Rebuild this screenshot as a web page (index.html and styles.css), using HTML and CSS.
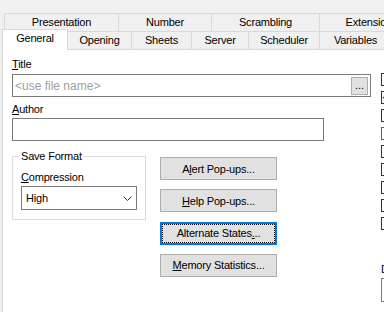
FILE: index.html
```html
<!DOCTYPE html>
<html lang="en">
<head>
  <meta charset="UTF-8">
  <title>Document Properties</title>
  <link rel="stylesheet" href="styles.css">
</head>
<body>

<div class="tabs">
  <div class="tab-row back">
    <div class="tab">Presentation</div>
    <div class="tab">Number</div>
    <div class="tab">Scrambling</div>
    <div class="tab">Extensions</div>
  </div>
  <div class="tab-row front">
    <div class="tab active">General</div>
    <div class="tab">Opening</div>
    <div class="tab">Sheets</div>
    <div class="tab">Server</div>
    <div class="tab">Scheduler</div>
    <div class="tab">Variables</div>
  </div>
</div>

<div class="panel">
  <div class="main">
    <div class="label"><u>T</u>itle</div>
    <div class="field title-field">
      <span class="placeholder">&lt;use file name&gt;</span>
      <span class="browse">...</span>
    </div>
    <div class="label author-label"><u>A</u>uthor</div>
    <div class="field author-field"></div>

    <div class="lower">
      <fieldset class="group">
        <legend>Save Format</legend>
        <div class="label"><u>C</u>ompression</div>
        <div class="combo">
          <span>High</span>
          <svg width="9" height="5" viewBox="0 0 9 5"><polyline points="0.5,0.5 4.5,4.5 8.5,0.5" fill="none" stroke="#333" stroke-width="1"/></svg>
        </div>
      </fieldset>

      <div class="buttons">
        <button class="btn">A<u>l</u>ert Pop-ups...</button>
        <button class="btn"><u>H</u>elp Pop-ups...</button>
        <button class="btn focus">Alternate States<u>.</u>..</button>
        <button class="btn"><u>M</u>emory Statistics...</button>
      </div>
    </div>
  </div>

  <div class="side">
    <div class="checks">
      <span class="check"></span>
      <span class="check"><svg width="11" height="11" viewBox="0 0 11 11"><polyline points="1,5 4,8 10,2" fill="none" stroke="#555" stroke-width="1.5"/></svg></span>
      <span class="check"></span>
      <span class="check hot"></span>
      <span class="check"></span>
      <span class="check"></span>
      <span class="check"></span>
      <span class="check"></span>
      <span class="check"></span>
    </div>
    <div class="label side-label">D</div>
    <div class="field side-field"></div>
  </div>
</div>

</body>
</html>
```

FILE: styles.css
```css
* {
  box-sizing: border-box;
}

html, body {
  margin: 0;
  height: 100%;
}

body {
  font-family: 'Liberation Sans', Arial, sans-serif;
  font-size: 11px;
  letter-spacing: -0.2px;
  color: #000;
  background: #f0f0f0;
  overflow: hidden;
  display: flex;
  flex-direction: column;
}

/* tab strip */

.tabs {
  padding-top: 13px;
}

.tab-row {
  display: flex;
  height: 18px;
}

.tab-row.back {
  padding-left: 4px;
}

.tab-row.front {
  padding-left: 2px;
}

.tab {
  flex: none;
  height: 18px;
  border-top: 1px solid #d9d9d9;
  border-right: 1px solid #d9d9d9;
  background: #f0f0f0;
  line-height: 17px;
  text-align: center;
  white-space: nowrap;
}

.tab:first-child {
  border-left: 1px solid #d9d9d9;
}

.back .tab:nth-child(1) { width: 115px; }
.back .tab:nth-child(2) { width: 93px; }
.back .tab:nth-child(3) { width: 108px; }
.back .tab:nth-child(4) { width: 104px; }

.front .tab:nth-child(1) { width: 66px; }
.front .tab:nth-child(2) { width: 64px; }
.front .tab:nth-child(3) { width: 60px; }
.front .tab:nth-child(4) { width: 57px; }
.front .tab:nth-child(5) { width: 71px; }
.front .tab:nth-child(6) { width: 72px; }

.tab.active {
  position: relative;
  z-index: 1;
  height: 21px;
  margin-top: -2px;
  background: #fff;
}

/* page body */

.panel {
  flex: 1;
  display: flex;
  margin-left: 2px;
  padding: 8px 0 0 9px;
  background: #fff;
  border-top: 1px solid #d9d9d9;
  border-left: 1px solid #d9d9d9;
}

.main {
  flex: none;
  width: 359px;
}

.label {
  line-height: 13px;
  white-space: nowrap;
}

.field {
  height: 23px;
  border: 1px solid #7a7a7a;
  background: #fff;
  display: flex;
  align-items: center;
  padding: 0 2px;
}

.title-field {
  margin-top: 3px;
}

.placeholder {
  flex: 1;
  color: #a0a0a0;
  font-size: 12px;
  letter-spacing: 0;
}

.browse {
  width: 17px;
  height: 18px;
  background: #e1e1e1;
  border: 1px solid #adadad;
  line-height: 14px;
  text-align: center;
  letter-spacing: 0;
}

.author-label {
  margin-top: 6px;
}

.author-field {
  width: 312px;
  margin-top: 2px;
}

.lower {
  display: flex;
  align-items: flex-start;
  margin-top: 9px;
}

.group {
  flex: none;
  width: 134px;
  margin: 0;
  padding: 8px 8px 9px 8px;
  border: 1px solid #dcdcdc;
}

.group legend {
  margin-left: -2px;
  padding: 0 2px;
  line-height: 13px;
}

.combo {
  height: 24px;
  margin-top: 2px;
  border: 1px solid #7a7a7a;
  display: flex;
  align-items: center;
  justify-content: space-between;
  padding: 0 4px 0 4px;
}

.combo svg {
  display: block;
}

.buttons {
  display: flex;
  flex-direction: column;
  gap: 9.33px;
  margin: 7px 0 0 14px;
}

.btn {
  width: 117px;
  height: 23px;
  padding: 0;
  background: #e1e1e1;
  border: 1px solid #adadad;
  font: inherit;
  letter-spacing: inherit;
  color: #000;
}

.btn.focus {
  border: 2px solid #0078d7;
  outline: 1px dotted #000;
  outline-offset: -3px;
}

/* right column, cut off by the window edge */

.side {
  flex: none;
  width: 30px;
  margin-left: 10px;
  padding-top: 15px;
}

.checks {
  display: flex;
  flex-direction: column;
  gap: 5px;
}

.check {
  display: block;
  width: 13px;
  height: 13px;
  border: 1px solid #333;
  background: #fff;
}

.check svg {
  display: block;
}

.check.hot {
  border-color: #0078d7;
}

.side-label {
  margin-top: 33px;
}

.side-field {
  height: 24px;
  margin-top: 2px;
}
```
